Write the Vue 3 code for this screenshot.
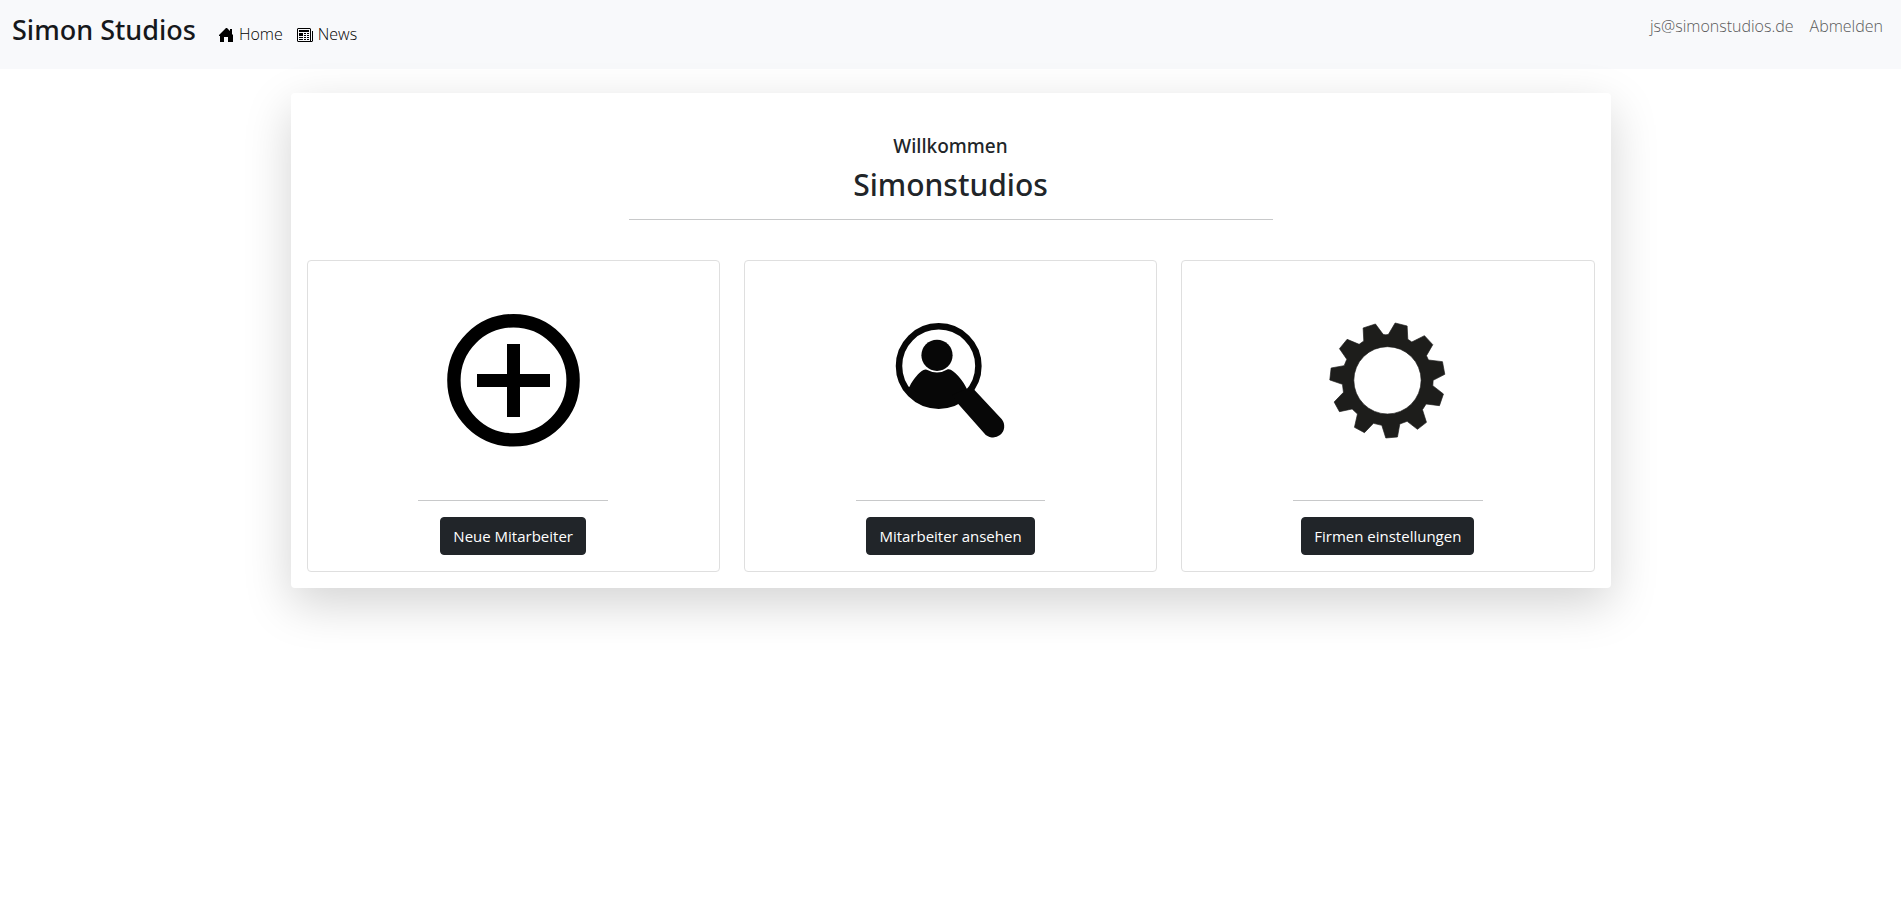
<script setup>
const cards = [
  { icon: 'plus', label: 'Neue Mitarbeiter' },
  { icon: 'search', label: 'Mitarbeiter ansehen' },
  { icon: 'gear', label: 'Firmen einstellungen' },
]
</script>

<template>
  <header class="navbar">
    <a class="brand" href="#">Simon Studios</a>
    <nav class="nav-links">
      <a class="nav-link" href="#">
        <svg class="nav-icon" viewBox="0 0 16 16" fill="currentColor">
          <path d="M8 2 1 9v1h1v6h4v-5h4v5h5V9l-1-1V3h-2v2L9 2z" />
        </svg>
        <span>Home</span>
      </a>
      <a class="nav-link" href="#">
        <svg class="nav-icon" viewBox="0 0 16 16" fill="currentColor">
          <path fill-rule="evenodd" d="M1 2h12l1 1v13H1l-1-1V3zM1 3v12h12V3zM15 5h1v10l-1 1h-1v-1h1z" />
          <path d="M2 4h10v2H2zM2 7h4v3H2zM2 11h4v1H2zM2 13h4v1H2zM7 7h2v1H7zM10 7h2v1h-2zM7 9h2v1H7zM10 9h2v1h-2zM7 11h2v1H7zM10 11h2v1h-2zM7 13h2v1H7zM10 13h2v1h-2z" />
        </svg>
        <span>News</span>
      </a>
    </nav>
    <nav class="user-links">
      <a href="#">js@simonstudios.de</a>
      <a href="#">Abmelden</a>
    </nav>
  </header>

  <main class="panel">
    <div class="welcome">
      <h5>Willkommen</h5>
      <h2>Simonstudios</h2>
      <hr>
    </div>

    <div class="cards">
      <section v-for="card in cards" :key="card.label" class="card">
        <svg v-if="card.icon === 'plus'" class="card-icon" viewBox="0 0 207 207">
          <circle cx="103.5" cy="103.3" r="59.6" fill="none" stroke="#000" stroke-width="13.4" />
          <path d="M97 67h13v30h30v13h-30v30H97v-30H67V97h30z" />
        </svg>
        <svg v-else-if="card.icon === 'search'" class="card-icon" viewBox="0 0 207 207" fill="#070707">
          <circle cx="91.7" cy="89" r="39.7" fill="none" stroke="#070707" stroke-width="6.5" />
          <circle cx="90" cy="78.3" r="15.6" />
          <path d="M62.5 109.7C66 102 72 95.500 76.500 93q1.800-.8 3.300-.2 10.700 5.800 21-.5 1.500-.4 3 .5c7 4.500 12.500 11.500 16 19l-6 12A39.700 39.700 0 0 1 58 112z" />
          <path d="M119.500 111.700 127.500 113 154.800 142.300A11 11 0 0 1 137.200 156.300L111.500 127.300 105 118z" />
        </svg>
        <svg v-else class="card-icon" viewBox="0 0 207 207">
          <g transform="translate(-115.200 -37) scale(.33333)" fill="none" stroke="#1d1d1b" stroke-linejoin="round">
            <path
              fill="#1d1d1b"
              fill-rule="evenodd"
              stroke-width="2"
              d="M583 264 620 252 643 283Q651 286 659 283L679 249 715 258 717 298 729 306 767 287 792 314 773 347 779 360 821 365 828 403 793 421 792 437 824 462 812 497 772 492 761 509 773 547 746 568 715 544 693 552 686 591 651 594 639 556 614 550 587 578 557 562 566 522 550 507 512 515 496 486 524 457 521 433 483 420 487 384 526 377 534 358 512 326 535 298 571 313 585 303ZM555 421a101 101 0 1 0 202 0a101 101 0 1 0-202 0Z"
            />
          </g>
        </svg>
        <hr>
        <button type="button" class="btn">{{ card.label }}</button>
      </section>
    </div>
  </main>
</template>

<style>
body {
  min-height: 100vh;
  margin: 0;
  background: #fff;
}
#app {
  display: flow-root;
  min-height: 100vh;
}
</style>

<style scoped>
.navbar,
.panel {
  font-family: "Segoe UI", "Open Sans", "Noto Sans", sans-serif;
  font-size: 16px;
  line-height: 24px;
  color: #212529;
  box-sizing: border-box;
}

.navbar {
  display: flex;
  align-items: flex-start;
  gap: 22px;
  padding: 8px 18px 17px 12px;
  background: #f8f9fb;
}
.navbar a {
  text-decoration: none;
}

.brand,
h5,
h2 {
  font-family: "Segoe UI", "Noto Sans", "Open Sans", sans-serif;
  font-weight: 500;
}
.brand {
  font-size: 27px;
  line-height: 44px;
  color: #16181b;
}

.nav-links {
  display: flex;
  gap: 14px;
  padding-top: 14px;
}
.nav-link {
  display: flex;
  align-items: center;
  gap: 5px;
  font-weight: 300;
  color: #000;
}
.nav-icon {
  width: 16px;
  height: 16px;
}

.user-links {
  display: flex;
  gap: 16px;
  margin-left: auto;
  padding-top: 6px;
  font-weight: 300;
}
.user-links a {
  color: #58595a;
}

.panel {
  max-width: 1320px;
  margin: 24px auto;
  padding: 16px;
  border-radius: 4px;
  background: #fff;
  box-shadow: 0 16px 48px rgba(0, 0, 0, 0.175);
}

.welcome {
  padding: 25px 0 40px;
  text-align: center;
}
h5,
h2 {
  margin: 0 0 8px;
}
h5 { font-size: 19px; line-height: 24px; }
h2 { font-size: 30px; line-height: 38px; }

hr {
  width: 50%;
  height: 1px;
  margin: 16px 0;
  border: 0;
  background: #c8c9ca;
}
.welcome hr {
  margin: 15px auto 0;
}

.cards {
  display: grid;
  grid-template-columns: repeat(3, 1fr);
  gap: 24px;
}
.card {
  display: flex;
  flex-direction: column;
  align-items: center;
  padding: 16px;
  border: 1px solid #dfdfdf;
  border-radius: 4px;
}
.card-icon {
  width: 207px;
  height: 207px;
}

.btn {
  padding: 6px 12px;
  border: 1px solid #212529;
  border-radius: 4px;
  background: #212529;
  color: #fff;
  font: inherit;
  font-size: 15px;
  cursor: pointer;
}
.btn:hover {
  background: #1c1f23;
}
</style>
